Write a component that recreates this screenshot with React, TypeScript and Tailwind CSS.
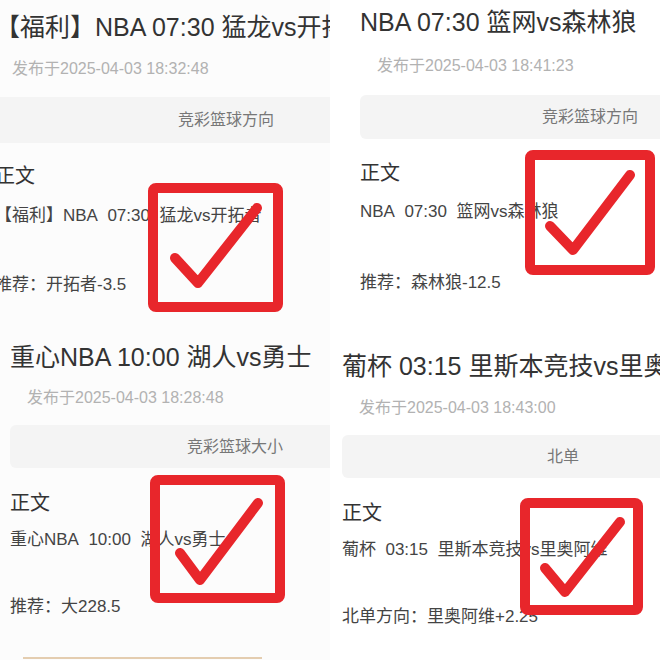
import React from "react";

type Box = { x: number; y: number; w: number; h: number; c: [number, number][] };

type PanelProps = {
  wrap: string;
  inner: string;
  title: string;
  date: string;
  bar: string;
  barCls: string;
  content: string;
  rec: string;
  m: { title: string; date: string; bar: string; zw: string; content: string; rec: string };
  box: Box;
  footer?: boolean;
};

function Panel(p: PanelProps) {
  const { box } = p;
  return (
    <div className={`relative overflow-hidden ${p.wrap}`}>
      <div className={`flex flex-col ${p.inner}`}>
        <div className={`whitespace-nowrap text-[25px] leading-[32px] text-[#333] ${p.m.title}`}>{p.title}</div>
        <div className={`whitespace-nowrap pl-[17px] text-[16px] leading-[24px] text-[#b2b2b2] ${p.m.date}`}>{p.date}</div>
        <div className={`flex shrink-0 items-center justify-center rounded-[6px] bg-[#f4f4f4] text-[16px] text-[#777] ${p.barCls} ${p.m.bar}`}>
          {p.bar}
        </div>
        <div className={`whitespace-nowrap text-[20px] leading-[28px] text-[#333] ${p.m.zw}`}>正文</div>
        <div className={`whitespace-nowrap text-[17px] leading-[24px] text-[#444] ${p.m.content}`}>{p.content}</div>
        <div className={`whitespace-nowrap text-[17px] leading-[24px] text-[#444] ${p.m.rec}`}>{p.rec}</div>
        {p.footer && <div className="mt-[38px] ml-[13px] h-[2px] w-[239px] bg-[#e4cdb0]" />}
      </div>
      <svg className="pointer-events-none absolute inset-0 h-full w-full" xmlns="http://www.w3.org/2000/svg">
        <rect
          x={box.x + 5}
          y={box.y + 5}
          width={box.w - 10}
          height={box.h - 10}
          rx={3}
          fill="none"
          stroke="#e8262b"
          strokeWidth={10}
          strokeLinejoin="round"
        />
        <polyline
          points={box.c.map((q) => q.join(",")).join(" ")}
          fill="none"
          stroke="#e8262b"
          strokeWidth={10}
          strokeLinecap="round"
          strokeLinejoin="round"
        />
      </svg>
    </div>
  );
}

export default function App() {
  const sp = "\u00a0\u00a0";
  return (
    <div className="grid h-[660px] w-[660px] grid-cols-[330px_330px] overflow-hidden bg-white font-['Liberation_Sans','Noto_Sans_CJK_SC',sans-serif]">
      <div className="flex flex-col bg-[#fcfcfc]">
        <Panel
          wrap="h-[320px]"
          inner="ml-[-5px]"
          title="【福利】NBA 07:30 猛龙vs开拓者"
          date="发布于2025-04-03 18:32:48"
          bar="竞彩篮球方向"
          barCls="h-[46px] w-[462px]"
          content={`【福利】NBA${sp}07:30${sp}猛龙vs开拓者`}
          rec="推荐：开拓者-3.5"
          m={{ title: "mt-[11px]", date: "mt-[14px]", bar: "mt-[16px]", zw: "mt-[19px]", content: "mt-[14px]", rec: "mt-[45px]" }}
          box={{ x: 148, y: 183, w: 135, h: 129, c: [[175, 258], [198, 283], [257, 208]] }}
        />
        <Panel
          wrap="h-[340px]"
          inner="ml-[10px]"
          title="重心NBA 10:00 湖人vs勇士"
          date="发布于2025-04-03 18:28:48"
          bar="竞彩篮球大小"
          barCls="h-[43px] w-[450px]"
          content={`重心NBA${sp}10:00${sp}湖人vs勇士`}
          rec="推荐：大228.5"
          m={{ title: "mt-[21px]", date: "mt-[13px]", bar: "mt-[15px]", zw: "mt-[21px]", content: "mt-[11px]", rec: "mt-[43px]" }}
          box={{ x: 150, y: 155, w: 135, h: 128, c: [[180, 233], [200, 260], [258, 183]] }}
          footer
        />
      </div>
      <div className="flex flex-col bg-white">
        <Panel
          wrap="h-[330px]"
          inner="ml-[30px]"
          title="NBA 07:30 篮网vs森林狼"
          date="发布于2025-04-03 18:41:23"
          bar="竞彩篮球方向"
          barCls="h-[44px] w-[460px]"
          content={`NBA${sp}07:30${sp}篮网vs森林狼`}
          rec="推荐：森林狼-12.5"
          m={{ title: "mt-[6px]", date: "mt-[16px]", bar: "mt-[17px]", zw: "mt-[20px]", content: "mt-[13px]", rec: "mt-[47px]" }}
          box={{ x: 195, y: 150, w: 130, h: 125, c: [[220, 226], [243, 250], [300, 175]] }}
        />
        <Panel
          wrap="h-[330px]"
          inner="ml-[12px]"
          title="葡杯 03:15 里斯本竞技vs里奥阿维"
          date="发布于2025-04-03 18:43:00"
          bar="北单"
          barCls="h-[43px] w-[442px]"
          content={`葡杯${sp}03:15${sp}里斯本竞技vs里奥阿维`}
          rec="北单方向：里奥阿维+2.25"
          m={{ title: "mt-[20px]", date: "mt-[14px]", bar: "mt-[15px]", zw: "mt-[21px]", content: "mt-[11px]", rec: "mt-[43px]" }}
          box={{ x: 190, y: 168, w: 123, h: 117, c: [[215, 238], [235, 262], [290, 192]] }}
        />
      </div>
    </div>
  );
}
